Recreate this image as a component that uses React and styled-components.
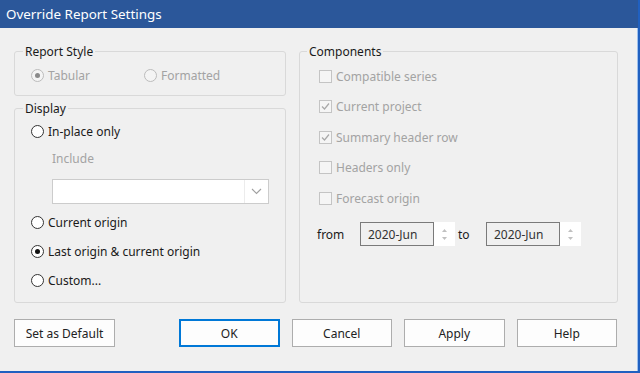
import React from "react";
import styled, { createGlobalStyle } from "styled-components";

const GlobalStyle = createGlobalStyle`
  html, body {
    margin: 0;
    padding: 0;
    background: #f0f0f0;
  }
  body {
    font-family: "Noto Sans", "Open Sans", Arial, sans-serif;
    font-size: 12px;
    color: #1a1a1a;
  }
`;

const Window = styled.div`
  width: 640px;
  height: 373px;
  box-sizing: border-box;
  display: flex;
  flex-direction: column;
  background: #f0f0f0;
  border-right: 2px solid #2060c0;
  border-bottom: 2px solid #2060c0;
  box-shadow: inset -1px 0 0 #9cc0ee;
  overflow: hidden;
`;

const TitleBar = styled.div`
  height: 28px;
  flex: none;
  background: #2b579a;
  color: #fff;
  font-size: 13.4px;
  line-height: 28px;
  padding-left: 6px;
`;

const Body = styled.div`
  flex: 1;
  display: flex;
  flex-direction: column;
  padding: 16px 20px 0 14px;
`;

const TopArea = styled.div`
  display: flex;
  gap: 13px;
`;

const LeftColumn = styled.div`
  width: 272px;
  display: flex;
  flex-direction: column;
  gap: 5px;
`;

const Group = styled.fieldset`
  margin: 0;
  box-sizing: border-box;
  height: ${(p) => p.$height}px;
  flex: ${(p) => (p.$grow ? 1 : "none")};
  border: 1px solid #d9d9d9;
  border-radius: 3px;
  padding: ${(p) => p.$pad || "6px 14px 0 16px"};
  display: flex;
  flex-direction: column;
  min-width: 0;
`;

const Legend = styled.legend`
  padding: 0 2px;
  margin-left: ${(p) => p.$ml}px;
  line-height: 15px;
  color: #1a1a1a;
`;

const OptionRow = styled.div`
  display: flex;
  align-items: center;
  height: 18px;
  margin-top: ${(p) => p.$mt || 0}px;
`;

const Option = styled.label`
  display: flex;
  align-items: center;
  gap: 4px;
  width: ${(p) => (p.$width ? `${p.$width}px` : "auto")};
  color: ${(p) => (p.$disabled ? "#a3a3a3" : "#1a1a1a")};
`;

const RadioCircle = styled.span`
  width: 13px;
  height: 13px;
  box-sizing: border-box;
  border-radius: 50%;
  border: 1px solid ${(p) => (p.$disabled ? "#bcbcbc" : "#333")};
  background: ${(p) => (p.$disabled ? "#f4f4f4" : "#fff")};
  display: flex;
  align-items: center;
  justify-content: center;
  flex: none;
  &::after {
    content: "";
    width: 5px;
    height: 5px;
    border-radius: 50%;
    background: ${(p) => (p.$disabled ? "#8a8a8a" : "#111")};
    display: ${(p) => (p.$checked ? "block" : "none")};
  }
`;

const CheckBox = styled.span`
  width: 13px;
  height: 13px;
  box-sizing: border-box;
  border: 1px solid #c4c4c4;
  background: #f5f5f5;
  display: flex;
  align-items: center;
  justify-content: center;
  flex: none;
  margin-left: 1px;
`;

const SubLabel = styled.div`
  color: #a3a3a3;
  margin: ${(p) => p.$m};
  padding-left: 21px;
  line-height: 16px;
`;

const Combo = styled.div`
  margin: 12px 2px 0 21px;
  height: 25px;
  box-sizing: border-box;
  border: 1px solid #cccccc;
  background: #fff;
  display: flex;
`;

const ComboField = styled.div`
  flex: 1;
`;

const ComboArrow = styled.div`
  width: 23px;
  border-left: 1px solid #ececec;
  display: flex;
  align-items: center;
  justify-content: center;
`;

const CheckList = styled.div`
  display: flex;
  flex-direction: column;
  gap: 10.6px;
  padding-top: 1px;
`;

const CheckRow = styled.div`
  display: flex;
  align-items: center;
  height: 20px;
`;

const RangeRow = styled.div`
  display: flex;
  align-items: center;
  margin-top: 14px;
  margin-left: -1px;
`;

const RangeLabel = styled.span`
  width: ${(p) => p.$width}px;
  padding-left: ${(p) => p.$pl || 0}px;
  box-sizing: border-box;
  flex: none;
  color: #1a1a1a;
`;

const Spin = styled.div`
  display: flex;
  height: 24px;
`;

const SpinField = styled.div`
  width: 74px;
  box-sizing: border-box;
  border: 1px solid #7a7a7a;
  background: #f0f0f0;
  color: #333;
  display: flex;
  align-items: center;
  padding-left: 7px;
`;

const SpinButtons = styled.div`
  width: 21px;
  background: #fff;
  display: flex;
  flex-direction: column;
  align-items: center;
  justify-content: center;
  gap: 5px;
`;

const ButtonRow = styled.div`
  display: flex;
  align-items: center;
  margin-top: 16px;
`;

const Button = styled.button`
  width: ${(p) => p.$width || 100.5}px;
  height: 28px;
  box-sizing: border-box;
  background: #fdfdfd;
  border: ${(p) => (p.$primary ? "2px solid #0078d7" : "1px solid #adadad")};
  font-family: inherit;
  font-size: 12px;
  color: #222;
  padding: 0;
  margin-left: ${(p) => p.$ml || 0}px;
`;

function Radio({ label, checked, disabled, width }) {
  return (
    <Option $disabled={disabled} $width={width}>
      <RadioCircle $checked={checked} $disabled={disabled} />
      {label}
    </Option>
  );
}

function Check({ label, checked }) {
  return (
    <CheckRow>
      <Option $disabled>
        <CheckBox>
          {checked && (
            <svg width="11" height="11" viewBox="0 0 11 11">
              <polyline points="2,5.5 4.5,8 9,2.5" fill="none" stroke="#a8a8a8" strokeWidth="1.2" />
            </svg>
          )}
        </CheckBox>
        {label}
      </Option>
    </CheckRow>
  );
}

function SpinBox({ value }) {
  return (
    <Spin>
      <SpinField>{value}</SpinField>
      <SpinButtons>
        <svg width="5" height="3" viewBox="0 0 5 3">
          <polygon points="2.5,0 5,3 0,3" fill="#c0c0c0" />
        </svg>
        <svg width="5" height="3" viewBox="0 0 5 3">
          <polygon points="0,0 5,0 2.5,3" fill="#c0c0c0" />
        </svg>
      </SpinButtons>
    </Spin>
  );
}

export default function App() {
  return (
    <>
      <GlobalStyle />
      <Window>
        <TitleBar>Override Report Settings</TitleBar>
        <Body>
          <TopArea>
            <LeftColumn>
              <Group $height={52} $pad="7px 14px 0 16px">
                <Legend $ml={-8}>Report Style</Legend>
                <OptionRow>
                  <Radio label="Tabular" checked disabled width={113} />
                  <Radio label="Formatted" disabled />
                </OptionRow>
              </Group>
              <Group $grow $pad="6px 14px 0 16px">
                <Legend $ml={-8}>Display</Legend>
                <OptionRow>
                  <Radio label="In-place only" />
                </OptionRow>
                <SubLabel $m="11px 0 0 0">Include</SubLabel>
                <Combo>
                  <ComboField />
                  <ComboArrow>
                    <svg width="11" height="7" viewBox="0 0 11 7">
                      <polyline points="1,1 5.5,5.5 10,1" fill="none" stroke="#a0a0a0" strokeWidth="1.1" />
                    </svg>
                  </ComboArrow>
                </Combo>
                <OptionRow $mt={9.5}>
                  <Radio label="Current origin" />
                </OptionRow>
                <OptionRow $mt={11}>
                  <Radio label="Last origin & current origin" checked />
                </OptionRow>
                <OptionRow $mt={11}>
                  <Radio label="Custom..." />
                </OptionRow>
              </Group>
            </LeftColumn>
            <Group $height={259} $grow $pad="6px 14px 0 18px">
              <Legend $ml={-11}>Components</Legend>
              <CheckList>
                <Check label="Compatible series" />
                <Check label="Current project" checked />
                <Check label="Summary header row" checked />
                <Check label="Headers only" />
                <Check label="Forecast origin" />
              </CheckList>
              <RangeRow>
                <RangeLabel $width={43}>from</RangeLabel>
                <SpinBox value="2020-Jun" />
                <RangeLabel $width={31} $pl={3}>to</RangeLabel>
                <SpinBox value="2020-Jun" />
              </RangeRow>
            </Group>
          </TopArea>
          <ButtonRow>
            <Button $width={101}>Set as Default</Button>
            <Button $primary $ml={64}>OK</Button>
            <Button $ml={12}>Cancel</Button>
            <Button $ml={12}>Apply</Button>
            <Button $ml={12}>Help</Button>
          </ButtonRow>
        </Body>
      </Window>
    </>
  );
}
